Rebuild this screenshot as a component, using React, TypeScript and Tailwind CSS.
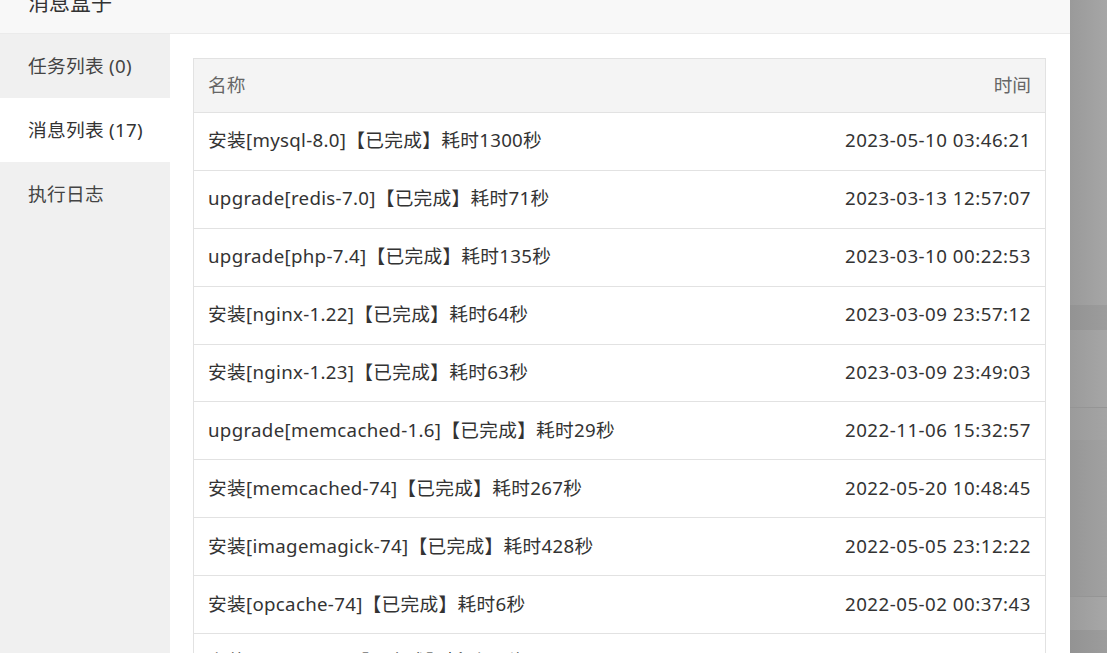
import React from "react";

const rows = [
  { name: "安装[mysql-8.0]【已完成】耗时1300秒", time: "2023-05-10 03:46:21" },
  { name: "upgrade[redis-7.0]【已完成】耗时71秒", time: "2023-03-13 12:57:07" },
  { name: "upgrade[php-7.4]【已完成】耗时135秒", time: "2023-03-10 00:22:53" },
  { name: "安装[nginx-1.22]【已完成】耗时64秒", time: "2023-03-09 23:57:12" },
  { name: "安装[nginx-1.23]【已完成】耗时63秒", time: "2023-03-09 23:49:03" },
  { name: "upgrade[memcached-1.6]【已完成】耗时29秒", time: "2022-11-06 15:32:57" },
  { name: "安装[memcached-74]【已完成】耗时267秒", time: "2022-05-20 10:48:45" },
  { name: "安装[imagemagick-74]【已完成】耗时428秒", time: "2022-05-05 23:12:22" },
  { name: "安装[opcache-74]【已完成】耗时6秒", time: "2022-05-02 00:37:43" },
  { name: "安装[fileinfo-74]【已完成】耗时16秒", time: "2022-05-02 00:31:10" },
];

const tabs = [
  { label: "任务列表 (0)", active: false },
  { label: "消息列表 (17)", active: true },
  { label: "执行日志", active: false },
];

export default function App() {
  return (
    <div
      className="flex h-[653px] w-full overflow-hidden"
      style={{ fontFamily: '"Noto Sans", "Noto Sans CJK SC", sans-serif' }}
    >
      {/* modal */}
      <div className="flex w-[1070px] shrink-0 flex-col bg-white">
        <div className="h-[34px] shrink-0 overflow-hidden border-b border-[#ebebeb] bg-[#f8f8f8] pl-[28px]">
          <div className="-mt-[8px] text-[21px] leading-[21px] text-[#333]">消息盒子</div>
        </div>
        <div className="flex flex-1 overflow-hidden">
          <div className="w-[170px] shrink-0 bg-[#f0f0f0]">
            {tabs.map((t) => (
              <div
                key={t.label}
                className={
                  t.active
                    ? "flex h-[64px] items-center bg-white pl-[28px] text-[18.7px] tracking-[0.3px] text-[#333]"
                    : "flex h-[64px] items-center pl-[28px] text-[18.7px] tracking-[0.3px] text-[#444]"
                }
              >
                {t.label}
              </div>
            ))}
          </div>
          <div className="flex-1 overflow-hidden pl-[23px] pr-[24px] pt-[24px]">
            <div className="border-x border-t border-[#e2e2e2]">
              <div className="flex h-[53px] items-center justify-between bg-[#f4f4f4] px-[14px] text-[18.7px] text-[#666]">
                <span>名称</span>
                <span>时间</span>
              </div>
              {rows.map((r) => (
                <div
                  key={r.time + r.name}
                  className="flex h-[57.9px] items-center justify-between border-t border-[#e2e2e2] px-[14px] pb-[2px] text-[18.7px] text-[#333]"
                >
                  <span className="tracking-[0.3px]">{r.name}</span>
                  <span className="tracking-[0.5px]">{r.time}</span>
                </div>
              ))}
            </div>
          </div>
        </div>
      </div>

      {/* dimmed page behind */}
      <div className="flex flex-1 flex-col">
        <div className="h-[305px] bg-gradient-to-r from-[#9a9a9a] to-[#a6a6a6]" />
        <div className="h-[25px] bg-gradient-to-r from-[#939393] to-[#9c9c9c]" />
        <div className="h-[78px] border-b border-[#959595] bg-gradient-to-r from-[#9b9b9b] to-[#a6a6a6]" />
        <div className="h-[32px] bg-gradient-to-r from-[#9b9b9b] to-[#a4a4a4]" />
        <div className="h-[157px] border-b border-[#959595] bg-gradient-to-r from-[#979797] to-[#a1a1a1]" />
        <div className="h-[33px] bg-gradient-to-r from-[#9c9c9c] to-[#a7a7a7]" />
        <div className="flex-1 bg-gradient-to-r from-[#939393] to-[#9c9c9c]" />
      </div>
    </div>
  );
}
